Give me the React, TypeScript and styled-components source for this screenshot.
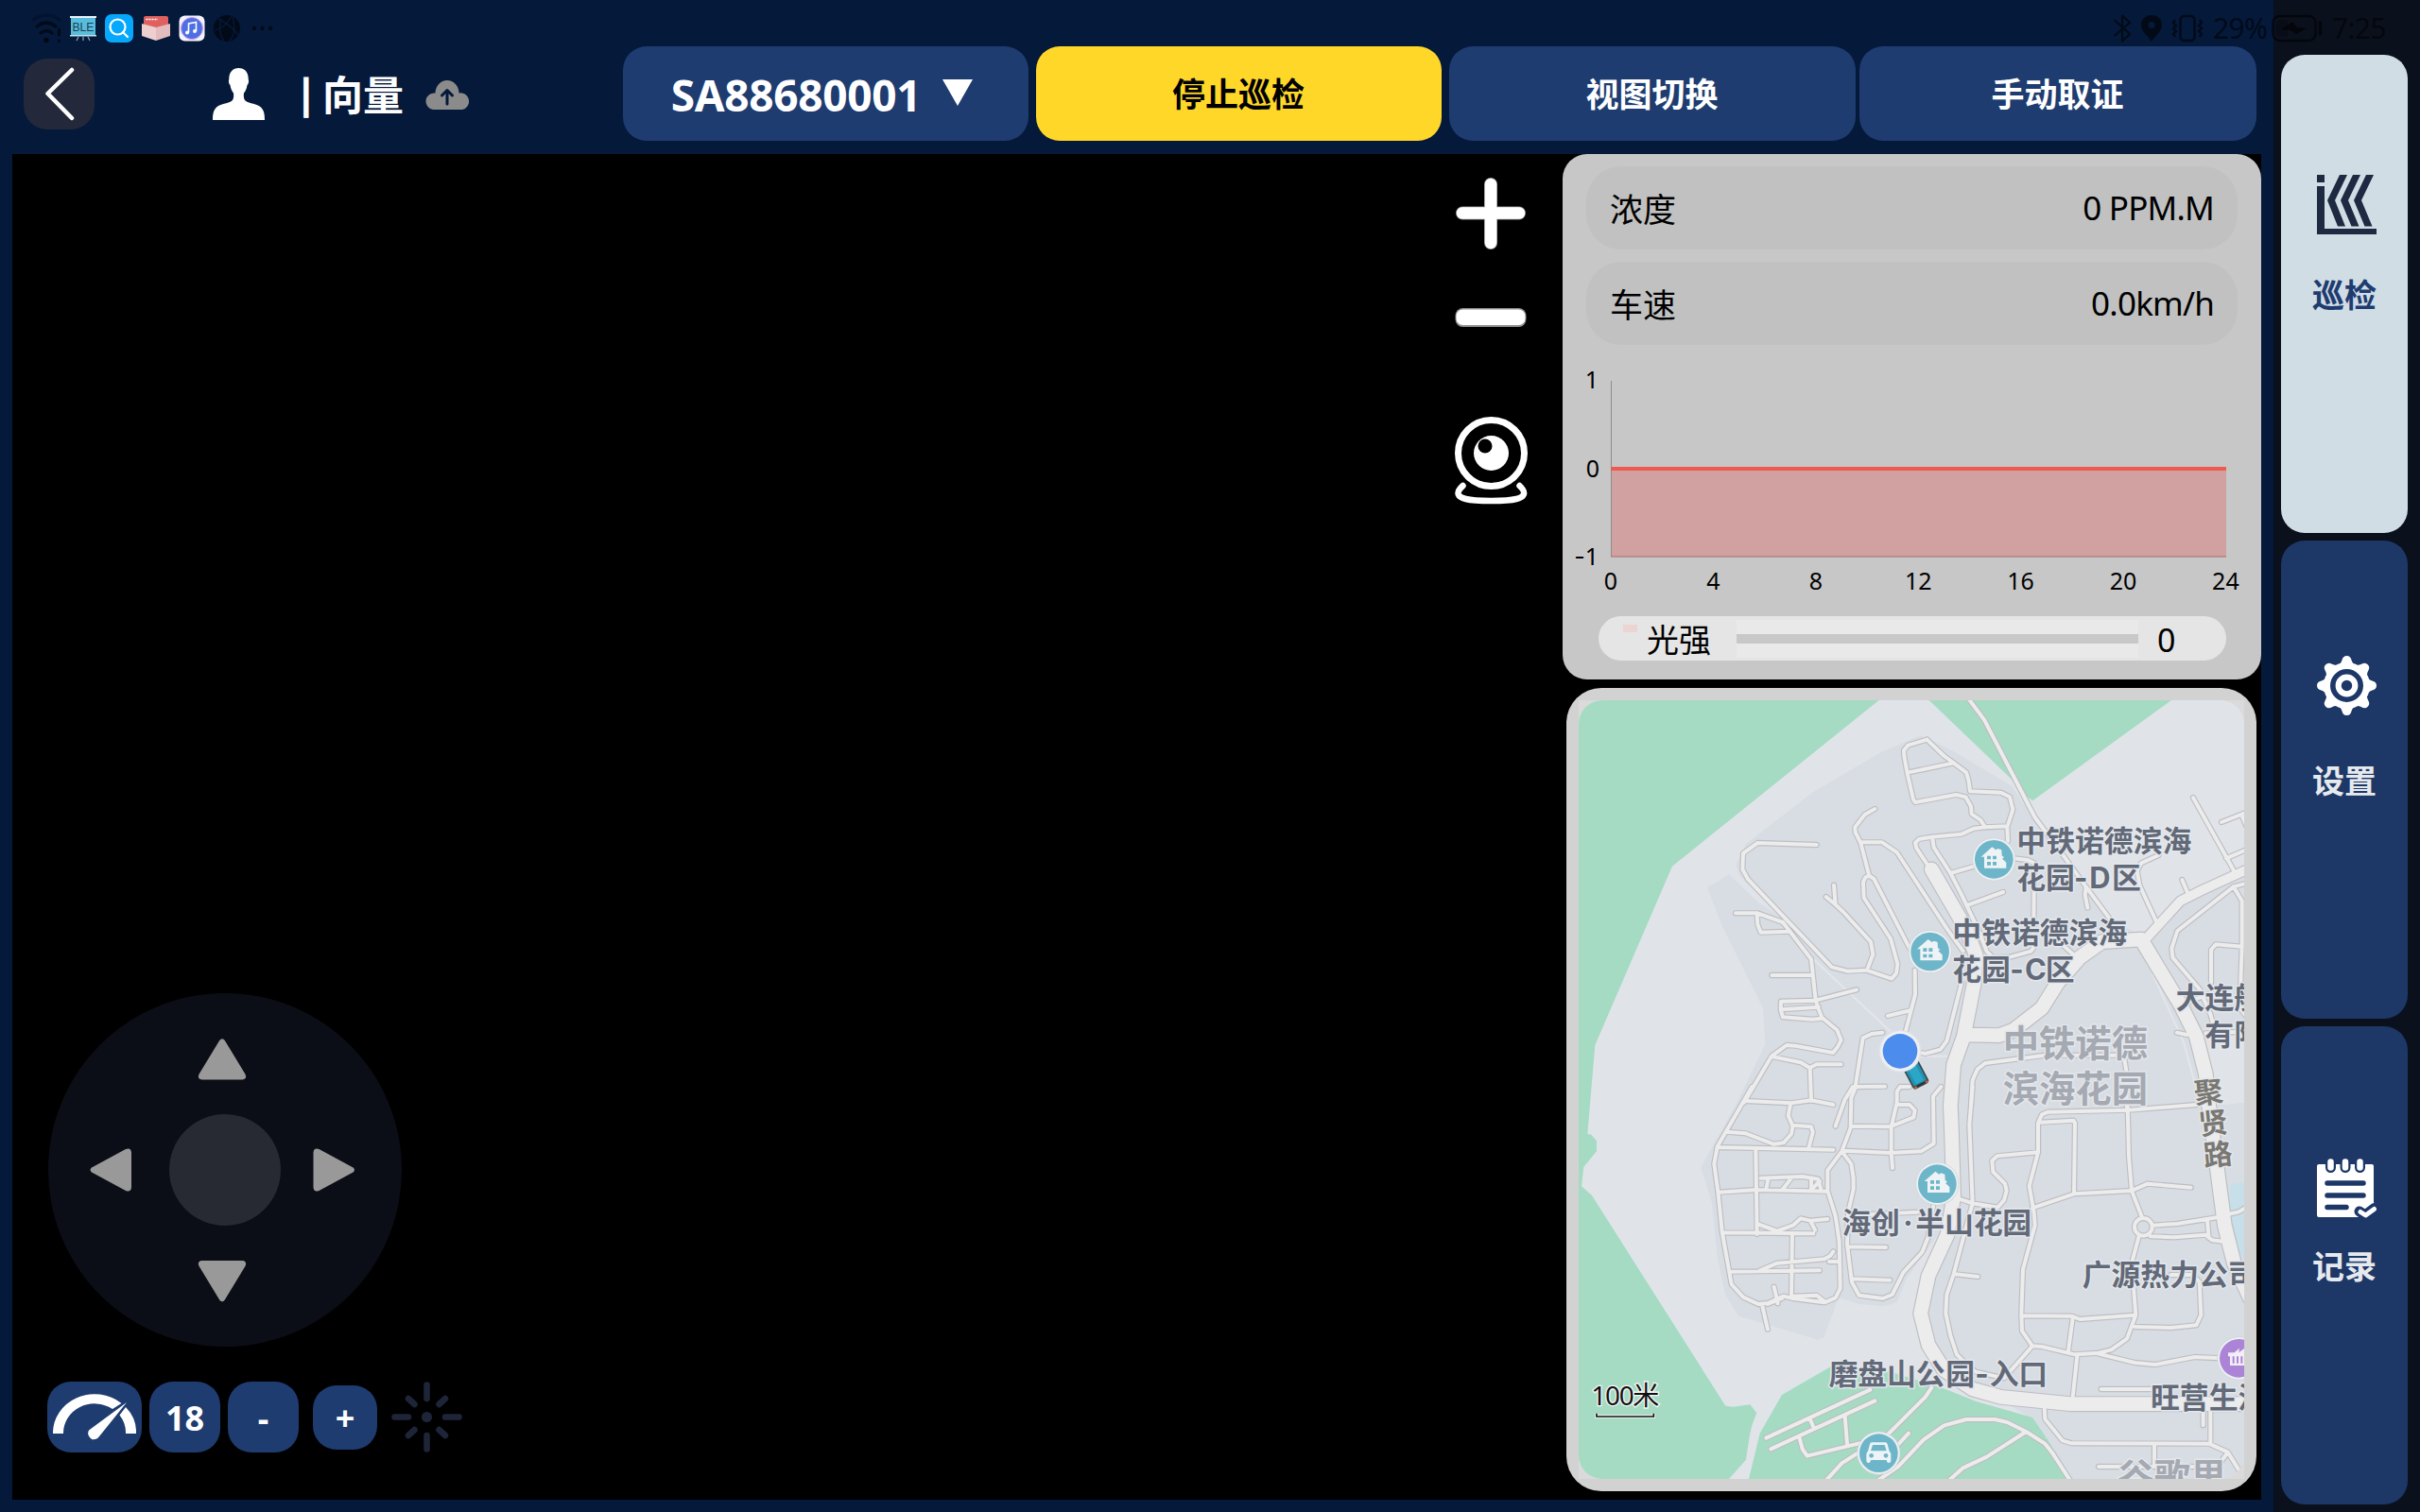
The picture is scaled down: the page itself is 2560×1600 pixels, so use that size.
import React from "react";
import styled, { createGlobalStyle } from "styled-components";

const Global = createGlobalStyle`
  * { box-sizing: border-box; }
  body { margin: 0; background: #05193a; font-family: "Noto Sans", "Noto Sans CJK SC", sans-serif; }
  svg { display: block; flex: none; }
`;

const Page = styled.div`
  position: relative;
  display: flex;
  width: 2560px;
  height: 1600px;
  overflow: hidden;
  background: #0b101d;
`;

/* ---------- status bar ---------- */
const StatusBar = styled.div`
  position: absolute;
  z-index: 2;
  top: 0;
  left: 0;
  width: 100%;
  height: 60px;
  padding: 0 37px 0 33px;
  display: flex;
  align-items: center;
  justify-content: space-between;
  color: rgba(0, 0, 0, 0.58);
`;
const StatusGroup = styled.div<{ $gap: number }>`
  display: flex;
  align-items: center;
  gap: ${(p) => p.$gap}px;
`;
const StatusText = styled.span<{ $width: number }>`
  width: ${(p) => p.$width}px;
  font-size: 30px;
  line-height: 60px;
  letter-spacing: -0.7px;
  white-space: nowrap;
`;

/* ---------- main column ---------- */
const Main = styled.main`
  width: 2405px;
  height: 1600px;
  display: flex;
  flex-direction: column;
  background: #05193a;
`;
const Header = styled.header`
  height: 163px;
  padding: 49px 18px 0 25px;
  display: flex;
`;
const Account = styled.div`
  width: 634px;
  height: 100px;
  display: flex;
  align-items: center;
`;
const BackButton = styled.button`
  width: 75px;
  height: 75px;
  margin-right: 125px;
  padding: 0;
  border: 0;
  border-radius: 25px;
  background: #23283a;
  display: grid;
  place-items: center;
`;
const Divider = styled.span`
  width: 23px;
  margin: -2px 0 0 38px;
  color: #fff;
  font: 900 37px/60px "Noto Sans CJK SC", sans-serif;
  -webkit-text-stroke: 1px #fff;
`;
const UserName = styled.span`
  width: 88px;
  margin: -2px 20px 0 0;
  color: #fff;
  font: 700 43px/60px "Noto Sans CJK SC", sans-serif;
  white-space: nowrap;
`;
const HeaderButton = styled.button<{ $width: number; $gap: number; $active?: boolean }>`
  width: ${(p) => p.$width}px;
  height: 100px;
  margin: 0 ${(p) => p.$gap}px 0 0;
  padding: 0 1px 2px 0;
  border: 0;
  border-radius: 25px;
  background: ${(p) => (p.$active ? "#ffd729" : "#1e3c70")};
  color: ${(p) => (p.$active ? "#000" : "#fff")};
  font: 700 35px/98px "Noto Sans CJK SC", sans-serif;
  display: flex;
  align-items: center;
  justify-content: center;
  gap: 22px;
`;
const DeviceId = styled.span`
  width: 265px;
  margin-left: -8px;
  padding-top: 3px;
  font: 700 46px/96px "Noto Sans", sans-serif;
  letter-spacing: -0.3px;
  white-space: nowrap;
`;

const Stage = styled.section`
  height: 1424px;
  margin: 0 13px;
  display: flex;
  background: #000;
`;
const VideoArea = styled.div`
  width: 1489px;
  padding: 0 0 50px 38px;
  display: flex;
  flex-direction: column;
  justify-content: flex-end;
  gap: 37px;
`;
const ControlRow = styled.div`
  height: 75px;
  margin-left: -1px;
  display: flex;
  align-items: center;
`;
const ControlKey = styled.button<{ $width: number; $height?: number; $gap: number }>`
  width: ${(p) => p.$width}px;
  height: ${(p) => p.$height ?? 75}px;
  margin: 0 ${(p) => p.$gap}px 0 0;
  padding: 2px 0 0 0;
  border: 0;
  border-radius: 25px;
  background: #1e3c70;
  color: #fff;
  font: 700 36px/70px "Noto Sans", sans-serif;
  display: flex;
  align-items: center;
  justify-content: center;
`;
const ToolColumn = styled.div`
  width: 151px;
  padding: 25px 1px 0 0;
  display: flex;
  flex-direction: column;
  align-items: center;
`;
const Tool = styled.div<{ $gap: number }>`
  margin-bottom: ${(p) => p.$gap}px;
`;
const SideColumn = styled.div`
  width: 739px;
  display: flex;
  flex-direction: column;
  gap: 9px;
`;

/* ---------- data panel ---------- */
const DataPanel = styled.section`
  height: 556px;
  padding-top: 13px;
  border-radius: 26px;
  background: #c7c7c7;
`;
const Metric = styled.div`
  height: 88px;
  margin: 0 25px 13px;
  padding: 0 25px 1px;
  border-radius: 37px;
  background: #c1c1c1;
  display: flex;
  align-items: center;
  justify-content: space-between;
  color: #000;
  font-size: 35px;
`;
const MetricValue = styled.span`
  letter-spacing: -0.8px;
`;
const ChartBox = styled.div`
  height: 274px;
`;
const LightRow = styled.div`
  height: 47px;
  margin: 0 37px 0 38px;
  padding-left: 26px;
  border-radius: 24px;
  background: #e5e5e5;
  display: flex;
  align-items: center;
  color: #000;
  font-size: 34px;
  line-height: 47px;
`;
const LegendSwatch = styled.i`
  width: 15px;
  height: 8px;
  margin: -21px 10px 0 0;
  background: #ecd4d3;
`;
const LightLabel = styled.span`
  width: 95px;
  padding-top: 3px;
`;
const LightValue = styled.span`
  padding-top: 3px;
`;
const Track = styled.div`
  width: 425px;
  height: 40px;
  margin-right: 20px;
  padding: 15px 0;
  background: #e9e9e9;
`;
const TrackLine = styled.div`
  height: 10px;
  background: #c8c8c8;
`;

/* ---------- map ---------- */
const MapFrame = styled.section`
  width: 730px;
  height: 850px;
  margin-left: 4px;
  padding: 13px;
  border-radius: 37px;
  background: #d2d2d2;
`;
const MapInner = styled.div`
  width: 704px;
  height: 824px;
  background: #dadada;
`;
const MapView = styled.svg`
  border-radius: 25px;
  background: #e0e4e9;
  font-family: "Inter", "Noto Sans CJK SC", sans-serif;
`;

/* ---------- navigation ---------- */
const Nav = styled.nav`
  width: 155px;
  padding: 58px 13px 8px 8px;
  display: flex;
  flex-direction: column;
  gap: 8px;
`;
const NavCard = styled.div<{ $active?: boolean; $iconTop: number; $iconHeight: number }>`
  height: 506px;
  padding-top: ${(p) => p.$iconTop}px;
  border-radius: 25px;
  background: ${(p) => (p.$active ? "#d0dde5" : "#1d3867")};
  color: ${(p) => (p.$active ? "#1e3c70" : "#e6e9ee")};
  font: 700 34px/50px "Noto Sans CJK SC", sans-serif;
  display: flex;
  flex-direction: column;
  align-items: center;
  gap: ${(p) => 228 - p.$iconTop - p.$iconHeight}px;
  & > svg { margin-left: 4px; }
`;

/* ---------- icons ---------- */
const StatusIcons = () => (
  <StatusGroup $gap={9}>
    <svg width="32" height="36" viewBox="0 0 32 36" fill="none" stroke="currentColor" strokeWidth="3.4" strokeLinecap="round">
      <path d="M2 9Q16-1 30 9" opacity=".35" />
      <path d="M6 16Q16 8 26 16M10 23Q16 18 22 23" />
      <circle cx="16" cy="30.5" r="1.8" fill="currentColor" strokeWidth="2" />
      <path d="M29.500 19V25M29.500 31V31.500" strokeWidth="3" />
    </svg>
    <svg width="28" height="30" viewBox="0 0 28 30">
      <rect y="2" width="28" height="2" fill="#e8f4f8" />
      <rect x="1" y="4" width="26" height="19" fill="#58bcdc" />
      <rect y="22" width="28" height="1.500" fill="#bfe3ee" />
      <path d="M9 24L7 28M14 24V28M19 24L21 28" stroke="#8fa7b8" strokeWidth="1.200" />
      <text x="14" y="17.500" fontSize="12.500" textAnchor="middle" fill="#1d3c50" fontFamily="Liberation Sans" textLength="23" lengthAdjust="spacingAndGlyphs">BLE</text>
    </svg>
    <svg width="30" height="30" viewBox="0 0 30 30">
      <rect width="30" height="30" rx="7" fill="#05a8fd" />
      <circle cx="13.500" cy="13.500" r="8" fill="none" stroke="#fff" strokeWidth="2.200" />
      <path d="M19 19L24 24" stroke="#fff" strokeWidth="2.200" strokeLinecap="round" />
    </svg>
    <svg width="30" height="28" viewBox="0 0 30 28">
      <path d="M2 3Q2 1 4 1H26Q28 1 28 3V12L15 15L2 12Z" fill="#e0605f" />
      <path d="M4.500 4.500H17" stroke="#fff" strokeWidth="1.500" strokeDasharray="2 1" />
      <path d="M0 9L15 13V27L0 22Z" fill="#edcfd0" />
      <path d="M30 9L15 13V27L30 22Z" fill="#e3bcbf" />
    </svg>
    <svg width="28" height="28" viewBox="0 0 28 28">
      <rect x="0.500" y="0.500" width="27" height="27" rx="6" fill="#f4f3fb" />
      <circle cx="14" cy="14" r="11.500" fill="#4e6fe4" stroke="#d79be8" strokeWidth="1" />
      <path d="M10.500 18.500V9L18.500 7.500V17" fill="none" stroke="#fff" strokeWidth="1.600" />
      <circle cx="9" cy="18.500" r="2" fill="#fff" />
      <circle cx="17" cy="17" r="2" fill="#fff" />
    </svg>
    <svg width="30" height="30" viewBox="0 0 30 30">
      <circle cx="14" cy="15" r="14" fill="currentColor" />
      <path d="M5 5Q19 12 26 22M1 17Q11 16 19 2M11 29Q4 18 8 5M16 29Q25 20 20 3" fill="none" stroke="#05193a" strokeWidth="1.400" />
    </svg>
    <svg width="30" height="8" viewBox="0 0 30 8" fill="currentColor">
      <circle cx="4" cy="4" r="2.200" /><circle cx="12.500" cy="4" r="2.200" /><circle cx="21" cy="4" r="2.200" />
    </svg>
  </StatusGroup>
);

const SystemIcons = () => (
  <StatusGroup $gap={10}>
    <svg width="20" height="30" viewBox="0 0 20 30" fill="none" stroke="currentColor" strokeWidth="2.200" strokeLinejoin="round">
      <path d="M1.500 6L18 21L10 28.500V1.500L18 9L1.500 23" />
    </svg>
    <svg width="22" height="28" viewBox="0 0 22 28">
      <path d="M11 0C4.500 0 0 4.600 0 10.500C0 17.500 7 21.500 11 28C15 21.500 22 17.500 22 10.500C22 4.600 17.500 0 11 0ZM11 7A3.500 3.500 0 1 1 11 14A3.500 3.500 0 1 1 11 7Z" fill="currentColor" fillRule="evenodd" />
    </svg>
    <svg width="34" height="30" viewBox="0 0 34 30" fill="none" stroke="currentColor" strokeWidth="2.400">
      <rect x="9.500" y="2" width="15" height="26" rx="4" />
      <path d="M4 6L2 9L5 12L2 15L5 18L2 21L4 24M30 6L32 9L29 12L32 15L29 18L32 21L30 24" />
    </svg>
    <StatusText $width={52}>29%</StatusText>
    <svg width="54" height="30" viewBox="0 0 54 30" fill="none" stroke="currentColor" strokeWidth="2.400">
      <rect x="1.500" y="2" width="45" height="26" rx="7" />
      <rect x="5" y="6" width="12" height="18" rx="3" fill="currentColor" stroke="none" opacity=".4" />
      <path d="M22 8L10 16L20 17L26 21L37 15L27 14Z" fill="currentColor" stroke="none" />
      <path d="M51.500 9V21" strokeWidth="3.500" strokeLinecap="round" />
    </svg>
    <StatusText $width={56}>7:25</StatusText>
  </StatusGroup>
);

const triangle = "M-2.800-20.500Q0-24 2.800-20.500L24.500 13.500Q26.500 18.500 21.500 19H-21.500Q-26.500 18.500-24.500 13.500Z";
const sideTriangle = "M-2.500-20.500Q0-23.500 2.500-20.500L22 15.500Q24 21 18.500 21.500H-18.500Q-24 21-22 15.500Z";
const Joystick = () => (
  <svg width="374" height="374" viewBox="0 0 374 374">
    <circle cx="187" cy="187" r="187" fill="#0b0e16" />
    <circle cx="187" cy="187" r="59" fill="#282a33" />
    <g fill="#999">
      <path d={triangle} transform="translate(184 71.500) scale(1 1.050)" />
      <path d={triangle} transform="translate(184 303) rotate(180) scale(1 1.050)" />
      <path d={sideTriangle} transform="translate(66.500 187) rotate(-90)" />
      <path d={sideTriangle} transform="translate(302 187) rotate(90)" />
    </g>
  </svg>
);

/* ---------- map data: three drawing units per pixel, four survey quadrants ---------- */
const quadrants = [
  {
    at: "0 0",
    lanes:
      "M845 522L658 516L612 549L610 600L628 632L893 910L942 923L1003 920L1083 947L1098 930L1102 900L1080 820L995 690L993 640L1000 625L1012 620L1027 630L1140 850" +
      "M1030 408L998 426L967 466L968 482L985 516L1012 620M985 514L1053 514L1100 546L1260 790L1310 860" +
      "M900 650L905 712M875 687L905 712L930 735L1017 830L1024 870L1005 920" +
      "M588 739L658 739L738 768L828 885L842 1015L850 1040L862 1070L910 1110L923 1142L912 1163L897 1182L778 1160L750 1158L703 1192L615 1340" +
      "M656 745L658 775L668 800L755 797M703 936L832 936" +
      "M972 982L842 1016L732 1019L731 1045L738 1069L830 1076L862 1073M731 1045L852 1037" +
      "M703 1194L795 1213L823 1230L845 1219L923 1219M824 1230L828 1335" +
      "M1054 1118L1020 1122L992 1135L968 1290L1062 1289" +
      "M1157 920L1158 997L1145 1047L1128 1112M1071 1065L1145 1047" +
      "M1195 188L1135 206L1122 222L1123 240L1133 295L1152 378L1158 387L1288 363M1133 293L1280 262",
    roads: "",
    big: "",
  },
  {
    at: "1140 0",
    lanes:
      "M55 188L110 240L140 262L180 292L188 320L192 352L290 356L318 370L328 410L310 465L312 510" +
      "M148 363L178 370L195 400L197 424L225 443L240 466" +
      "M310 463L240 466L205 470L165 488L70 497L30 504L18 516L22 532L60 590" +
      "M72 497L77 530L130 612L165 680L222 800L245 860L265 880L320 878L385 860L393 850L396 580L375 570L330 565M130 612L205 590M188 712L297 672" +
      "M185 55L237 125L398 435L480 545L560 655L638 760M560 655L557 680L565 722M480 835L520 870" +
      "M165 960L118 1145L98 1172L50 1185L25 1180" +
      "M790 555L735 580L722 605L730 650L785 770M865 633L885 680M900 372L1005 560L1030 605M990 450L1072 418M1005 565L1072 536M1055 430L1070 465" +
      "M1072 643L1028 655L850 795L832 850L835 880L920 980L955 1060L962 1085M1028 655L1055 700L1055 840L1048 1040L1072 1070M1055 845L972 838L957 855L957 960" +
      "M848 1118L880 1125M890 1020L950 995M940 1120L1072 1115" +
      "M195 1350L200 1270L215 1235L240 1215L430 1190L680 1190L688 1240L690 1360",
    roads: "M755 815L860 700L930 665L1072 600",
    big:
      "M70 600L180 790L210 870L205 960L172 1130L140 1220L130 1350L133 1420L140 1640L120 1760L60 1890L35 2010L60 2110L110 2190L200 2250L290 2275L510 2297L1072 2297" +
      "M185 1125L285 1127L330 1110L420 1040L470 960L540 880L610 830L735 822L860 1030L910 1130L940 1250L950 1350L975 1540L1000 1730L1030 1850L1080 1960",
  },
  {
    at: "0 1290",
    lanes:
      "M640 0L530 190L520 245L533 340L545 460L575 627L612 668L660 690L690 687L740 665L770 672L870 685L905 670L920 640L917 490L905 410L880 330L880 265L925 205L953 130L955 35L970 0" +
      "M620 45L765 52L828 43L898 57M762 55L755 92L768 122L828 127L833 145L820 195M770 122L765 150L740 178L708 182L620 148L560 143" +
      "M530 192L898 200M652 195L656 468M533 335L656 327L880 332M668 290L800 285L850 293L860 330M692 290L685 325M765 290L738 325M828 290L828 325M855 300L830 325" +
      "M545 463L835 466M656 435L720 458L770 440L795 418L825 425L840 455M825 425L880 420M768 466L765 660" +
      "M570 587L855 583M665 583L720 560L870 547L888 537L898 523M885 555L918 555" +
      "M710 635L722 688M672 692L690 770M690 690L735 672M770 665L845 662L868 680" +
      "M905 125L935 40L960 0M955 125L1083 127M930 203L1080 210L1177 205L1217 180L1215 30L1240 0" +
      "M1140 0L1110 0L1100 15L1100 50L1082 127L1082 210L1086 258M1100 57L1140 57L1157 75L1153 97L1083 125" +
      "M925 205L955 245L962 290L962 325L945 400L942 500L957 620L980 662L1055 672L1085 660L1120 590L1180 525L1198 480L1215 380" +
      "M942 508L1065 510M957 610L1078 614M1015 405L1165 398" +
      "M685 1115L1015 962M700 1150L1030 997M823 1052L837 1085M935 1045L942 1135M790 1112L800 1150L815 1172L990 1130M875 1250L925 1195L1075 1100L1190 985L1210 955M1100 1140L1137 1100",
    roads: "",
    big: "",
  },
  {
    at: "1140 1290",
    lanes:
      "M-100 1250L-35 1205L45 1120L110 1075L180 1056L270 1056L310 1065L370 1095L430 1133L455 1165L510 1250M370 1095L245 1175L170 1210L125 1250" +
      "M200 0L190 120L200 370L140 595L118 660L115 720L130 790L150 850L180 880L210 905L300 925L390 823M145 595L217 603M155 355L200 370L280 383L300 360L308 330L303 308L265 270L262 235L278 220L408 208" +
      "M910 57L695 74L440 80L420 88L408 115L408 208L380 315L395 400L398 440L360 580L355 720L357 775L390 823L420 825L525 850L600 845L640 835L690 800L718 725L705 560L728 475" +
      "M415 113L520 107L525 115L522 340L390 385M522 340L705 330L755 308L893 320M692 60L696 220L705 330L738 415" +
      "M714 445A28 28 0 1 1 770 445A28 28 0 1 1 714 445" +
      "M770 440L850 435L975 415M765 475L840 478L940 470L960 487L1000 492M945 425L950 480M1010 405L1045 397L1072 380" +
      "M357 727L515 728L540 738L715 725M518 735L503 845M532 855L518 985M600 848L715 876L780 882L905 858L990 862" +
      "M715 762L830 765L910 757L925 725L920 620L900 597L830 597M608 960L770 960" +
      "M428 1015L430 1055L485 1123L515 1132L950 1133L1010 1160L1072 1260M955 1020L955 1133M932 1035L932 1075M777 1133L777 1206M600 1206L900 1206M1010 1160L985 1195",
    roads: "",
    big: "",
  },
];

const RoadLayer = ({ color, lane, road, big }: { color: string; lane: number; road: number; big: number }) => (
  <g fill="none" stroke={color} strokeLinecap="round" strokeLinejoin="round">
    {quadrants.map((q) => (
      <g key={q.at} transform={`translate(${q.at})`}>
        <path d={q.lanes} strokeWidth={lane} />
        {q.roads && <path d={q.roads} strokeWidth={road} />}
        {q.big && <path d={q.big} strokeWidth={big} />}
      </g>
    ))}
  </g>
);

const Poi = ({ x, y, color, children }: { x: number; y: number; color: string; children: React.ReactNode }) => (
  <g transform={`translate(${x} ${y})`}>
    <circle r="69" fill="#cfd3d7" />
    <circle r="67" fill="#eceff1" />
    <circle r="61" fill={color} />
    {children}
  </g>
);

const House = () => (
  <>
    <path d="M-41-8L-6-39L6-30L12-34L24-30L25-12L32-6L26-2L39 10V28H-31V-8Z" fill="#eef3f5" />
    <path d="M-22-11H-10V0H-22ZM-4-11H8V0H-4ZM-22 8H-10V19H-22ZM-4 8H8V19H-4Z" fill="#6db6ca" />
  </>
);

/* x is a start position, or one position per character where spacing is uneven */
const labels: { x: number | string; y: number; t: string; big?: boolean }[] = [
  { x: 1480, y: 542, t: "中铁诺德滨海" },
  { x: "1480 1572 1662 1711 1782", y: 659, t: "花园-D区" },
  { x: 1276, y: 835, t: "中铁诺德滨海" },
  { x: "1276 1368 1459 1506 1571", y: 952, t: "花园-C区" },
  { x: 1985, y: 1042, t: "大连船" },
  { x: 2077, y: 1159, t: "有限" },
  { x: 1436, y: 1193, t: "中铁诺德", big: true },
  { x: 1436, y: 1338, t: "滨海花园", big: true },
  { x: "925 1017 1120 1159 1251 1343 1435", y: 1755, t: "海创·半山花园" },
  { x: "884 976 1068 1160 1255 1348 1394 1486", y: 2234, t: "磨盘山公园-入口" },
  { x: 1688, y: 1920, t: "广源热力公司" },
  { x: 1905, y: 2310, t: "旺营生活" },
  { x: 1801, y: 2572, t: "谷歌里", big: true },
];
const streetName: [string, number, number][] = [["聚", 2089, 1307], ["贤", 2104, 1405], ["路", 2118, 1504]];

const CityMap = () => (
  <MapView width="704" height="824" viewBox="90 63 2112 2472">
    <path d="M1175 174L1280 225L1465 335L1535 440L1780 760L1875 810L2000 700L2202 600V1100L2050 1110L2110 1350L2202 1340V2535H1650L1575 2405L1530 2345L1440 2290L1200 2150L1160 2010L1200 1850L1230 1760L1130 1900L1100 1975L1060 1987L980 1980L915 1960L868 2085L850 2093L598 2018L555 1950L530 1830L513 1660L478 1545L590 1345L682 1155L675 1040L545 780L498 657L568 616L660 705L730 750L600 620L590 585L620 520L830 357L1045 230Z" fill="#d8dde4" />
    <path d="M830 880L1080 1115M1170 1193H1260M1880 860L2010 1150L2060 1330" fill="none" stroke="#e3e6ea" strokeWidth="6" />
    <g fill="#a5dbc3">
      <path d="M90 63H1043L387 590L142 1158L118 1440L130 1442L147 1462V1495L106 1545L99 1606L132 1635L556 2303L580 2306L634 2299L655 2326L640 2365L632 2400L621 2474L567 2535H90Z" />
      <path d="M1202 63H1971L1531 382L1500 360L1465 315Z" />
      <path d="M630 2535L665 2390L735 2268L887 2180L1080 2195L1160 2220L1260 2252L1350 2288L1530 2340L1575 2405L1655 2535Z" />
    </g>
    <path d="M2160 1598L2202 1593V1840L2185 1810L2150 1690Z" fill="#c6dfe8" />
    <RoadLayer color="#bdbec2" lane={19} road={36} big={51} />
    <RoadLayer color="#ececec" lane={12} road={29} big={44} />

    <g stroke="#e4e7eb" strokeWidth="9" strokeLinejoin="round" paintOrder="stroke">
      {labels.map((l) => (
        <text key={`${l.x}-${l.y}`} x={l.x} y={l.y} fontSize={l.big ? 115 : 92.500} fontWeight="700" fill={l.big ? "#a5a9b2" : "#626978"}>
          {l.t}
        </text>
      ))}
      {streetName.map(([t, x, y]) => (
        <text key={t} fontSize="92" fontWeight="700" fill="#7a7872" textAnchor="middle" transform={`translate(${x} ${y}) rotate(-6)`} y="34">{t}</text>
      ))}
    </g>

    <Poi x={1408} y={568} color="#6db6ca"><House /></Poi>
    <Poi x={1205} y={861} color="#6db6ca"><House /></Poi>
    <Poi x={1228} y={1598} color="#6db6ca"><House /></Poi>
    <Poi x={1042} y={2453} color="#6db6ca">
      <path d="M-22-34H22Q26-34 28-28L34-6Q39-2 39 4V24Q39 31 32 31Q26 31 25 22H-25Q-26 31-32 31Q-39 31-39 24V4Q-39-2-34-6L-28-28Q-26-34-22-34ZM-19-26L-25-7H25L19-26Z" fill="#eef3f5" fillRule="evenodd" />
      <circle cx="-23" cy="8" r="7" fill="#6db6ca" /><circle cx="23" cy="8" r="7" fill="#6db6ca" />
    </Poi>
    <Poi x={2185} y={2152} color="#ab84d7">
      <path d="M-34-18L-14-18L2-32L0-18L18-32V-18H34V-6H-34ZM-28-6H-20V20H-28ZM-14-6H-7V20H-14ZM-1-6H6V20H-1ZM12-6H34V20H12ZM-28 16H34V23H-28Z" fill="#f2edf7" />
    </Poi>

    <g transform="translate(1155 1242) rotate(-28)">
      <rect x="-28" y="-50" width="56" height="102" rx="10" fill="#36474e" />
      <rect x="-23" y="-50" width="46" height="94" rx="8" fill="#2590b0" />
      <rect x="-14" y="-40" width="28" height="78" rx="5" fill="#2aa6c6" />
      <rect x="-22" y="42" width="44" height="6" rx="3" fill="#2b3338" />
      <rect x="-25" y="44" width="10" height="6" rx="2" fill="#d8623c" />
      <rect x="15" y="44" width="10" height="6" rx="2" fill="#d8623c" />
    </g>
    <circle cx="1110" cy="1177" r="67" fill="#dfe3ea" />
    <circle cx="1110" cy="1177" r="63" fill="#f0f0f1" />
    <circle cx="1110" cy="1177" r="55" fill="#4c8ced" />

    <text x="130" y="2302" fontSize="84" fontFamily="Noto Sans, Noto Sans CJK SC" fill="#111" stroke="#f3f6f4" strokeWidth="8" paintOrder="stroke" textLength="216">100米</text>
    <path d="M147 2327V2337H328V2327" fill="none" stroke="#f3f6f4" strokeWidth="11" />
    <path d="M147 2327V2337H328V2327" fill="none" stroke="#111" strokeWidth="5" />
  </MapView>
);

const xTicks = [0, 4, 8, 12, 16, 20, 24];
const Chart = () => (
  <svg width="739" height="274" viewBox="0 0 739 274" fontFamily='"Noto Sans", sans-serif' fontSize="25" fill="#000">
    <rect x="51" y="118" width="651" height="93" fill="#d1a0a1" />
    <path d="M51.500 25V211" stroke="#8d8d8d" strokeWidth="1" />
    <path d="M51 211H702" stroke="#a86a6c" strokeWidth="1.200" />
    <path d="M51 118H702" stroke="#ed5a50" strokeWidth="4" />
    <text x="38" y="33" textAnchor="end">1</text>
    <text x="39" y="127" textAnchor="end">0</text>
    <text x="38" y="220" textAnchor="end"><tspan fontFamily="Inter">-</tspan>1</text>
    {xTicks.map((t, i) => (
      <text key={t} x={51 + i * 108.400} y="246" textAnchor="middle">{t}</text>
    ))}
  </svg>
);

export default function App() {
  return (
    <Page>
      <Global />
      <StatusBar>
        <StatusIcons />
        <SystemIcons />
      </StatusBar>
      <Main>
        <Header>
          <Account>
            <BackButton aria-label="back">
              <svg width="34" height="58" viewBox="0 0 34 58" fill="none" stroke="#fff" strokeWidth="4.500" strokeLinecap="round" strokeLinejoin="round">
                <path d="M30 4L4.500 29L30 55" />
              </svg>
            </BackButton>
            <svg width="55" height="55" viewBox="0 0 55 55">
              <path d="M27.500 0C21 0 17 5 17.300 12C16.500 13 17 17 18.500 18C19 22 20.500 24.500 22 26.500C22.500 30 22 33 20.500 34.500C16 38 8 37.500 4 41.500C1 44.500 0 48 0 55H55C55 48 54 44.500 51 41.500C47 37.500 39 38 34.500 34.500C33 33 32.500 30 33 26.500C34.500 24.500 36 22 36.500 18C38 17 38.500 13 37.700 12C38 5 34 0 27.500 0Z" fill="#fff" />
            </svg>
            <Divider>|</Divider>
            <UserName>向量</UserName>
            <svg width="49" height="33" viewBox="0 0 49 33">
              <path d="M9 33A8.800 8.800 0 0 1 11.500 15.500A12.500 13.500 0 0 1 36.500 15.500A8.800 8.800 0 0 1 40 33Z" fill="#8b8b8b" />
              <path d="M24 27V13M18.500 18L24 12.500L29.500 18" fill="none" stroke="#05193a" strokeWidth="3" strokeLinecap="round" strokeLinejoin="round" />
            </svg>
          </Account>
          <HeaderButton $width={429} $gap={8}>
            <DeviceId>SA88680001</DeviceId>
            <svg width="32" height="28" viewBox="0 0 32 28"><path d="M0 0H32L16 28Z" fill="#fff" /></svg>
          </HeaderButton>
          <HeaderButton $width={429} $gap={8} $active>停止巡检</HeaderButton>
          <HeaderButton $width={430} $gap={4}>视图切换</HeaderButton>
          <HeaderButton $width={420} $gap={0}>手动取证</HeaderButton>
        </Header>

        <Stage>
          <VideoArea>
            <Joystick />
            <ControlRow>
              <ControlKey $width={100} $gap={8}>
                <svg width="88" height="52" viewBox="0 0 88 52" fill="#fff">
                  <path d="M0 42A44 41 0 0 1 72.500 10L63 16A33 31 0 0 0 11 42Z" />
                  <path d="M77 14A44 40 0 0 1 88 42H77A33 31 0 0 0 70.500 22.500Z" />
                  <path d="M78 9L49 45Q46 49 41 48Q36 44 37.500 39.500Q38 38 40 37Z" />
                </svg>
              </ControlKey>
              <ControlKey $width={75} $gap={8}>18</ControlKey>
              <ControlKey $width={75} $gap={15}>-</ControlKey>
              <ControlKey $width={68} $height={68} $gap={15}>+</ControlKey>
              <svg width="75" height="75" viewBox="0 0 75 75" stroke="#1f2539" strokeWidth="6.500" strokeLinecap="round">
                <circle cx="37.500" cy="37.500" r="5.500" fill="#1f2539" stroke="none" />
                <path d="M37.500 3.500V18M37.500 57V71.500M3.500 37.500H18M57 37.500H71.500M18 18L24.500 24M50.500 51L57 57M57 18L50.500 24M24.500 51L18 57" />
              </svg>
            </ControlRow>
          </VideoArea>
          <ToolColumn>
            <Tool $gap={62}>
              <svg width="74" height="76" viewBox="0 0 74 76" strokeLinecap="round">
                <path d="M37 7V69M7 37.500H67" stroke="#8f8f8f" strokeWidth="14" />
                <path d="M37 7V69M7 37.500H67" stroke="#fff" strokeWidth="12.500" />
              </svg>
            </Tool>
            <Tool $gap={94}>
              <svg width="76" height="21" viewBox="0 0 76 21">
                <rect x="0.500" y="0" width="75" height="20" rx="8" fill="#8f8f8f" />
                <rect x="1.500" y="1.500" width="73" height="16.500" rx="7" fill="#fff" />
              </svg>
            </Tool>
            <svg width="78" height="94" viewBox="0 0 78 94">
              <circle cx="39.500" cy="38.500" r="35" fill="none" stroke="#fff" strokeWidth="7" />
              <circle cx="39.500" cy="38.500" r="18.500" fill="#fff" />
              <circle cx="33" cy="31" r="7.500" fill="#000" />
              <path d="M9.500 73C-8 89 25 89 39.500 89C54 89 86 89 69.500 73" fill="none" stroke="#fff" strokeWidth="6.500" strokeLinecap="round" />
            </svg>
          </ToolColumn>
          <SideColumn>
            <DataPanel>
              <Metric><span>浓度</span><MetricValue>0 PPM.M</MetricValue></Metric>
              <Metric><span>车速</span><MetricValue>0.0km/h</MetricValue></Metric>
              <ChartBox><Chart /></ChartBox>
              <LightRow>
                <LegendSwatch />
                <LightLabel>光强</LightLabel>
                <Track><TrackLine /></Track>
                <LightValue>0</LightValue>
              </LightRow>
            </DataPanel>
            <MapFrame>
              <MapInner><CityMap /></MapInner>
            </MapFrame>
          </SideColumn>
        </Stage>
      </Main>

      <Nav>
        <NavCard $active $iconTop={127} $iconHeight={63}>
          <svg width="63" height="63" viewBox="0 0 63 63" fill="#1d2a42">
            <path d="M0 0H8V8H0ZM0 12H8V57H63V63H0Z" />
            <path d="M24 0H32L19 27L30 54.500H22L11 27ZM38 0H46L33 27L44.500 54.500H36.500L25 27ZM52 0H60L47 27L58.500 54.500H50.500L39 27Z" />
          </svg>
          <span>巡检</span>
        </NavCard>
        <NavCard $iconTop={122} $iconHeight={63}>
          <svg width="63" height="63" viewBox="-31.500 -31.500 63 63">
            <g fill="#fff">
              {Array.from({ length: 8 }, (_, i) => (
                <path key={i} d="M-11.500-20Q-6-23-5-27Q-4-31.500 0-31.500Q4-31.500 5-27Q6-23 11.500-20Z" transform={`rotate(${i * 45})`} />
              ))}
              <circle r="24.500" />
            </g>
            <circle r="14.700" fill="none" stroke="#1d3867" strokeWidth="5.600" />
            <circle r="5.700" fill="#1d3867" />
          </svg>
          <span>设置</span>
        </NavCard>
        <NavCard $iconTop={140} $iconHeight={64}>
          <svg width="63" height="64" viewBox="0 0 63 64">
            <path d="M2 6H58Q60 6 60 8V46L63 52L50 62H2Q0 62 0 60V8Q0 6 2 6Z" fill="#fff" />
            <path d="M60 48L63 44V64H44V58Z" fill="#1d3867" />
            <path d="M14.500 2V9.500M30 2V9.500M45.500 2V9.500" stroke="#1d3867" strokeWidth="11" strokeLinecap="round" />
            <path d="M14.500 3.500V9.500M30 3.500V9.500M45.500 3.500V9.500" stroke="#fff" strokeWidth="6.500" strokeLinecap="round" />
            <path d="M11 26H49M11 39H49M11 51.500H31" stroke="#1d3867" strokeWidth="5.500" strokeLinecap="round" />
            <path d="M45 56L51 60L61 52.500" fill="none" stroke="#1d3867" strokeWidth="11" strokeLinecap="round" strokeLinejoin="round" />
            <path d="M46 56.500L51.500 60L60.500 53.500" fill="none" stroke="#fff" strokeWidth="5" strokeLinecap="round" strokeLinejoin="round" />
          </svg>
          <span>记录</span>
        </NavCard>
      </Nav>
    </Page>
  );
}
